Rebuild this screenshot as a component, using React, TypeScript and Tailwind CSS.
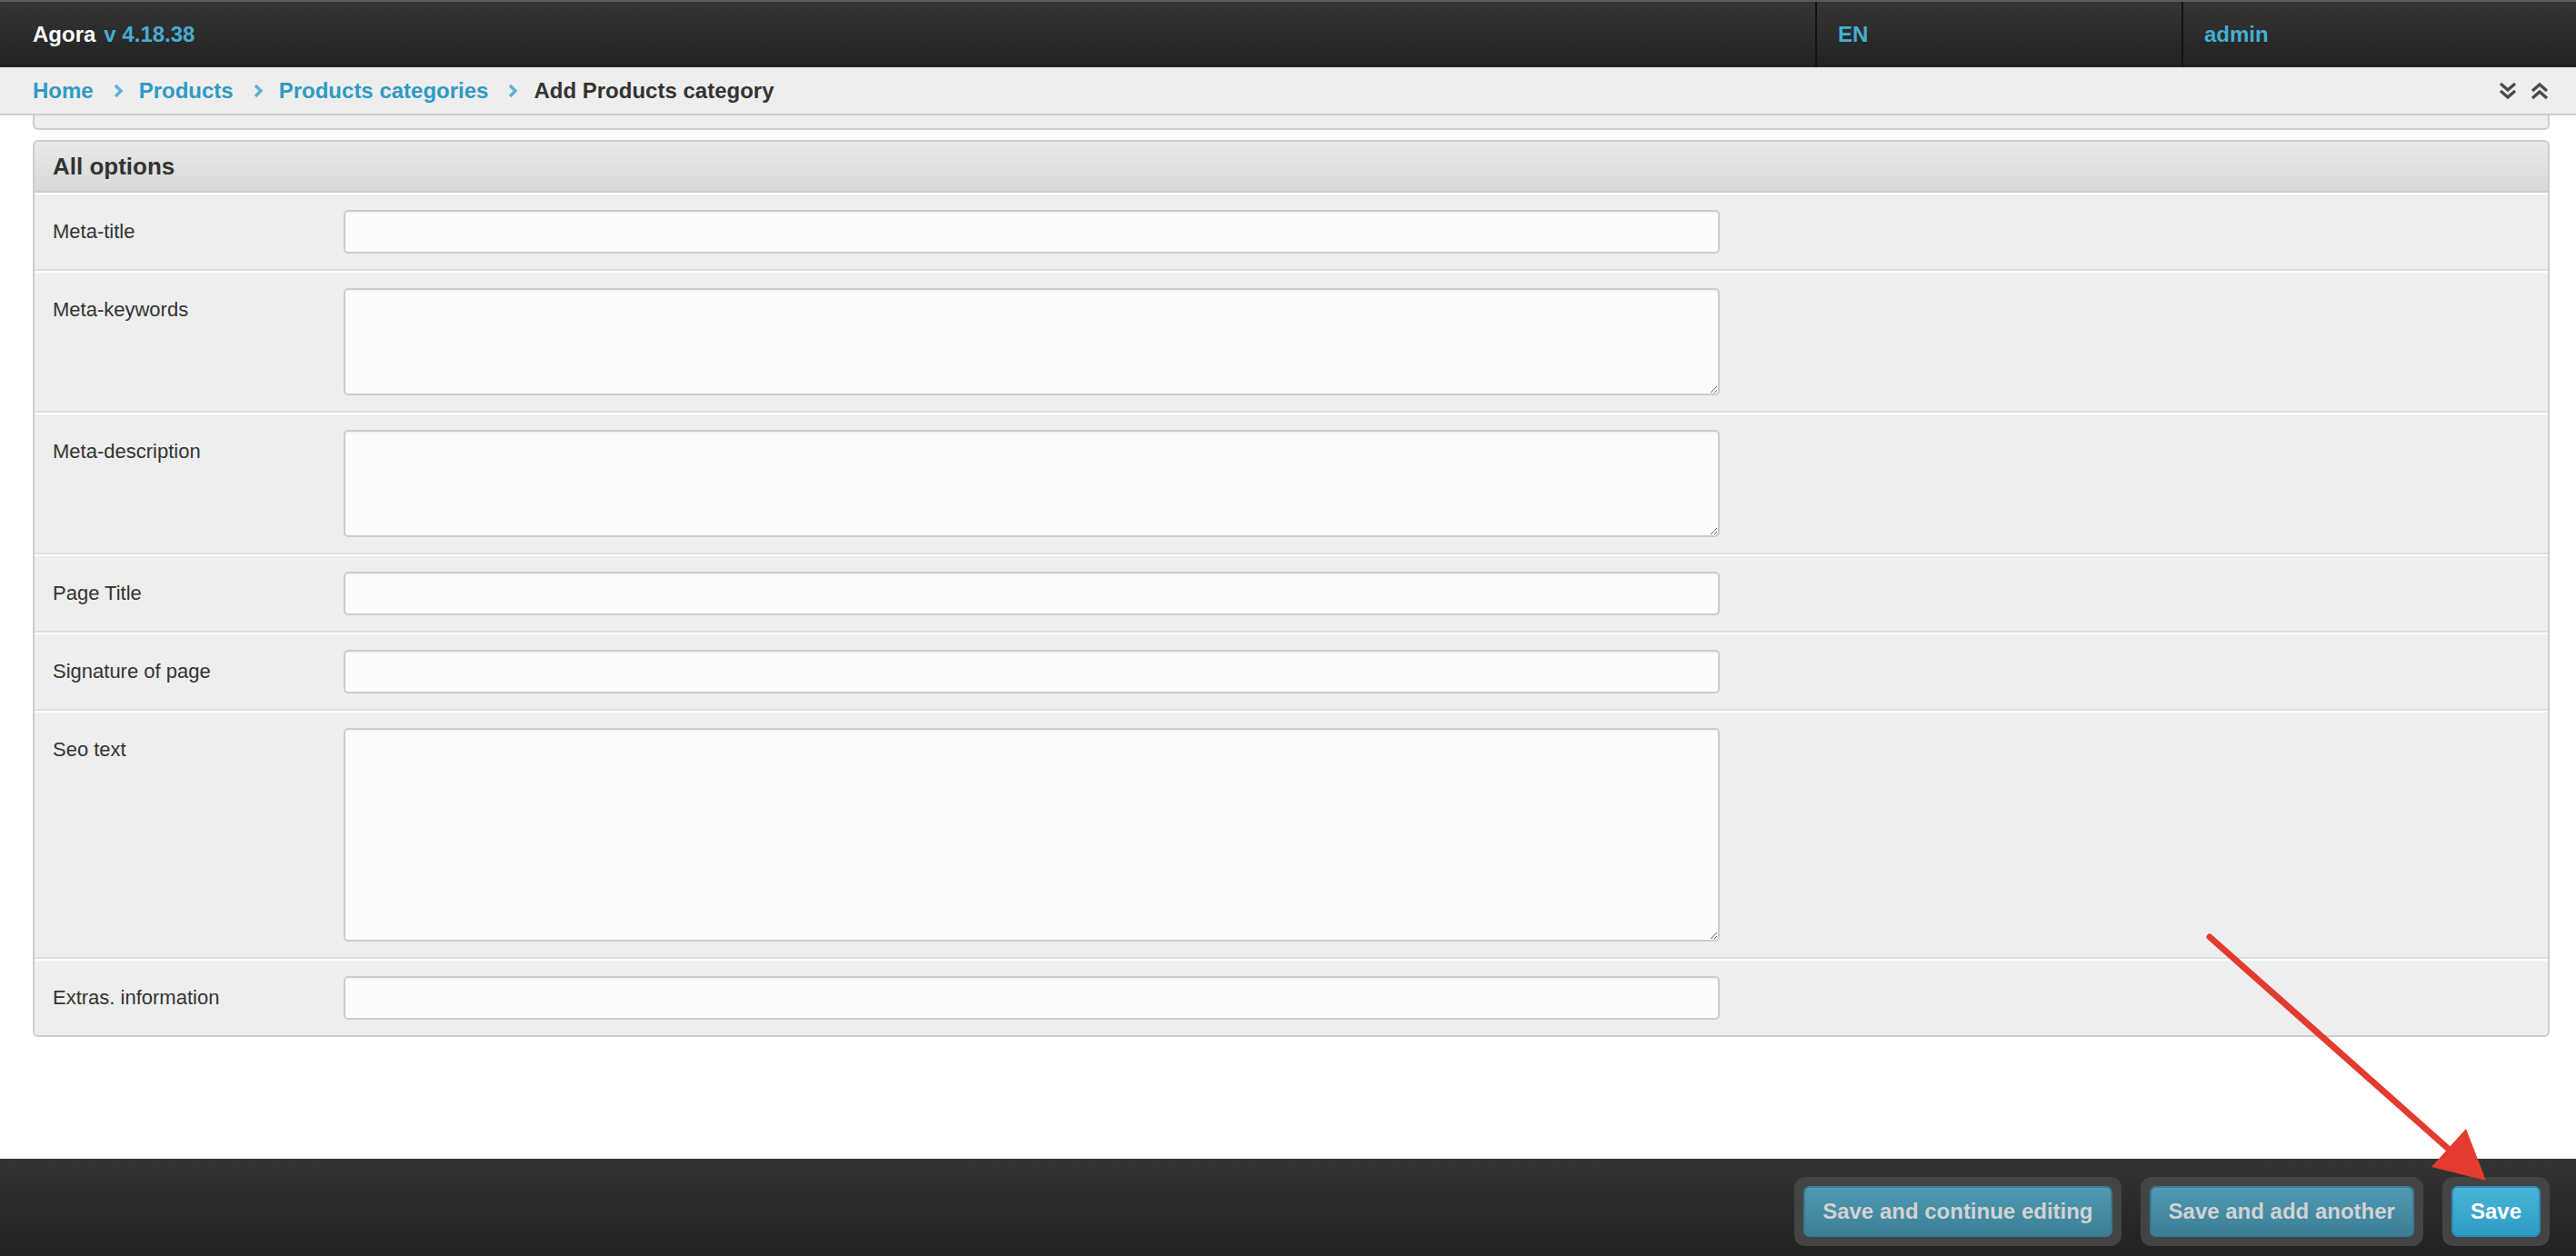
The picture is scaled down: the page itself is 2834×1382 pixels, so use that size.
const FONT = "font-['Liberation_Sans',Arial,Helvetica,sans-serif]";

const rows: { label: string; kind: "input" | "area"; h?: string }[] = [
  { label: "Meta-title", kind: "input" },
  { label: "Meta-keywords", kind: "area", h: "h-[118px]" },
  { label: "Meta-description", kind: "area", h: "h-[118px]" },
  { label: "Page Title", kind: "input" },
  { label: "Signature of page", kind: "input" },
  { label: "Seo text", kind: "area", h: "h-[235px]" },
  { label: "Extras. information", kind: "input" },
];

function Crumb() {
  return (
    <svg width="12" height="18" viewBox="0 0 12 18" className="shrink-0">
      <path d="M3 3 L9 9 L3 15" fill="none" stroke="#5fb0d2" strokeWidth="3.4" />
    </svg>
  );
}

function DoubleChevron({ up }: { up?: boolean }) {
  return (
    <svg width="22" height="20" viewBox="0 0 22 20" className={up ? "rotate-180" : ""}>
      <path d="M3 2 L11 9 L19 2 M3 10 L11 17 L19 10" fill="none" stroke="#4a4a4a" strokeWidth="3.4" />
    </svg>
  );
}

export default function App() {
  return (
    <div className={`${FONT} relative flex h-[1382px] w-full flex-col overflow-hidden bg-white`}>
      {/* top bar */}
      <header className="flex h-[74px] shrink-0 items-stretch border-t-2 border-[#5a5a5a] bg-gradient-to-b from-[#363636] to-[#212121]">
        <div className="flex flex-1 items-center pl-[36px] text-[24px] font-bold">
          <span className="text-white">Agora</span>
          <span className="ml-[9px] text-[#45aed3]">v 4.18.38</span>
        </div>
        <div className="flex w-[403px] items-center border-l-2 border-[#111] pl-[23px] text-[24px] font-bold text-[#45aed3]">
          EN
        </div>
        <div className="flex w-[434px] items-center border-l-2 border-[#111] pl-[23px] text-[24px] font-bold text-[#45aed3]">
          admin
        </div>
      </header>

      {/* breadcrumbs */}
      <nav className="flex h-[53px] shrink-0 items-center border-b-2 border-[#cdcdcd] bg-[#eeeeee] pl-[36px] pr-[29px] text-[24px] font-bold">
        <a className="text-[#2f9ac3]">Home</a>
        <span className="ml-[21px] mr-[17px] flex"><Crumb /></span>
        <a className="text-[#2f9ac3]">Products</a>
        <span className="ml-[21px] mr-[17px] flex"><Crumb /></span>
        <a className="text-[#2f9ac3]">Products categories</a>
        <span className="ml-[21px] mr-[17px] flex"><Crumb /></span>
        <span className="text-[#333]">Add Products category</span>
        <div className="ml-auto flex items-center gap-[13px]">
          <DoubleChevron />
          <DoubleChevron up />
        </div>
      </nav>

      {/* content */}
      <main className="flex-1 overflow-hidden pl-[36px] pr-[29px]">
        <div className="h-[16px] rounded-b-[6px] border-x-2 border-b-2 border-[#cdcdcd] bg-[#eeeeee]" />
        <section className="mt-[11px] overflow-hidden rounded-[6px] border-2 border-[#cdcdcd] bg-[#eeeeee]">
          <div className="flex h-[56px] items-center border-b-2 border-[#cdcdcd] bg-gradient-to-b from-[#e9e9e9] to-[#d9d9d9] pl-[20px] text-[26px] font-bold text-[#333]">
            All options
          </div>
          {rows.map((r, i) => (
            <div
              key={r.label}
              className={`flex items-start border-t-2 border-white py-[17px] ${i < rows.length - 1 ? "border-b-2 border-b-[#dddddd]" : ""}`}
            >
              <label className="w-[340px] shrink-0 pl-[20px] text-[22px] leading-[48px] text-[#333]">{r.label}</label>
              {r.kind === "input" ? (
                <input className="h-[48px] w-[1514px] rounded-[5px] border-2 border-[#cccccc] bg-[#fcfcfc] shadow-[inset_0_2px_2px_rgba(0,0,0,0.04)] outline-none" />
              ) : (
                <textarea className={`${r.h} w-[1514px] rounded-[5px] border-2 border-[#cccccc] bg-[#fcfcfc] shadow-[inset_0_2px_2px_rgba(0,0,0,0.04)] outline-none`} />
              )}
            </div>
          ))}
        </section>
      </main>

      {/* submit row */}
      <footer className="flex h-[107px] shrink-0 items-start justify-end gap-[21px] bg-gradient-to-b from-[#343434] to-[#212121] pr-[29px] pt-[20px] text-[24px] font-bold">
        <div className="rounded-[12px] bg-[#444] p-[10px]">
          <button className="h-[56px] rounded-[7px] border-2 border-[#3a7a91] bg-gradient-to-b from-[#5099b2] to-[#3b7f97] px-[19px] text-[#d2d2d2]">
            Save and continue editing
          </button>
        </div>
        <div className="rounded-[12px] bg-[#444] p-[10px]">
          <button className="h-[56px] rounded-[7px] border-2 border-[#3a7a91] bg-gradient-to-b from-[#5099b2] to-[#3b7f97] px-[19px] text-[#d2d2d2]">
            Save and add another
          </button>
        </div>
        <div className="rounded-[12px] bg-[#444] p-[10px]">
          <button className="h-[56px] rounded-[7px] border-2 border-[#2b8db3] bg-gradient-to-b from-[#4ab5d9] to-[#2e9ac3] px-[19px] text-white">
            Save
          </button>
        </div>
      </footer>

      {/* annotation arrow */}
      <svg className="pointer-events-none absolute inset-0" width="2834" height="1382" viewBox="0 0 2834 1382">
        <line x1="2431" y1="1031" x2="2698" y2="1268" stroke="#e33b2e" strokeWidth="7" strokeLinecap="round" />
        <polygon points="2735,1299 2675,1284 2713,1242" fill="#e33b2e" />
      </svg>
    </div>
  );
}
